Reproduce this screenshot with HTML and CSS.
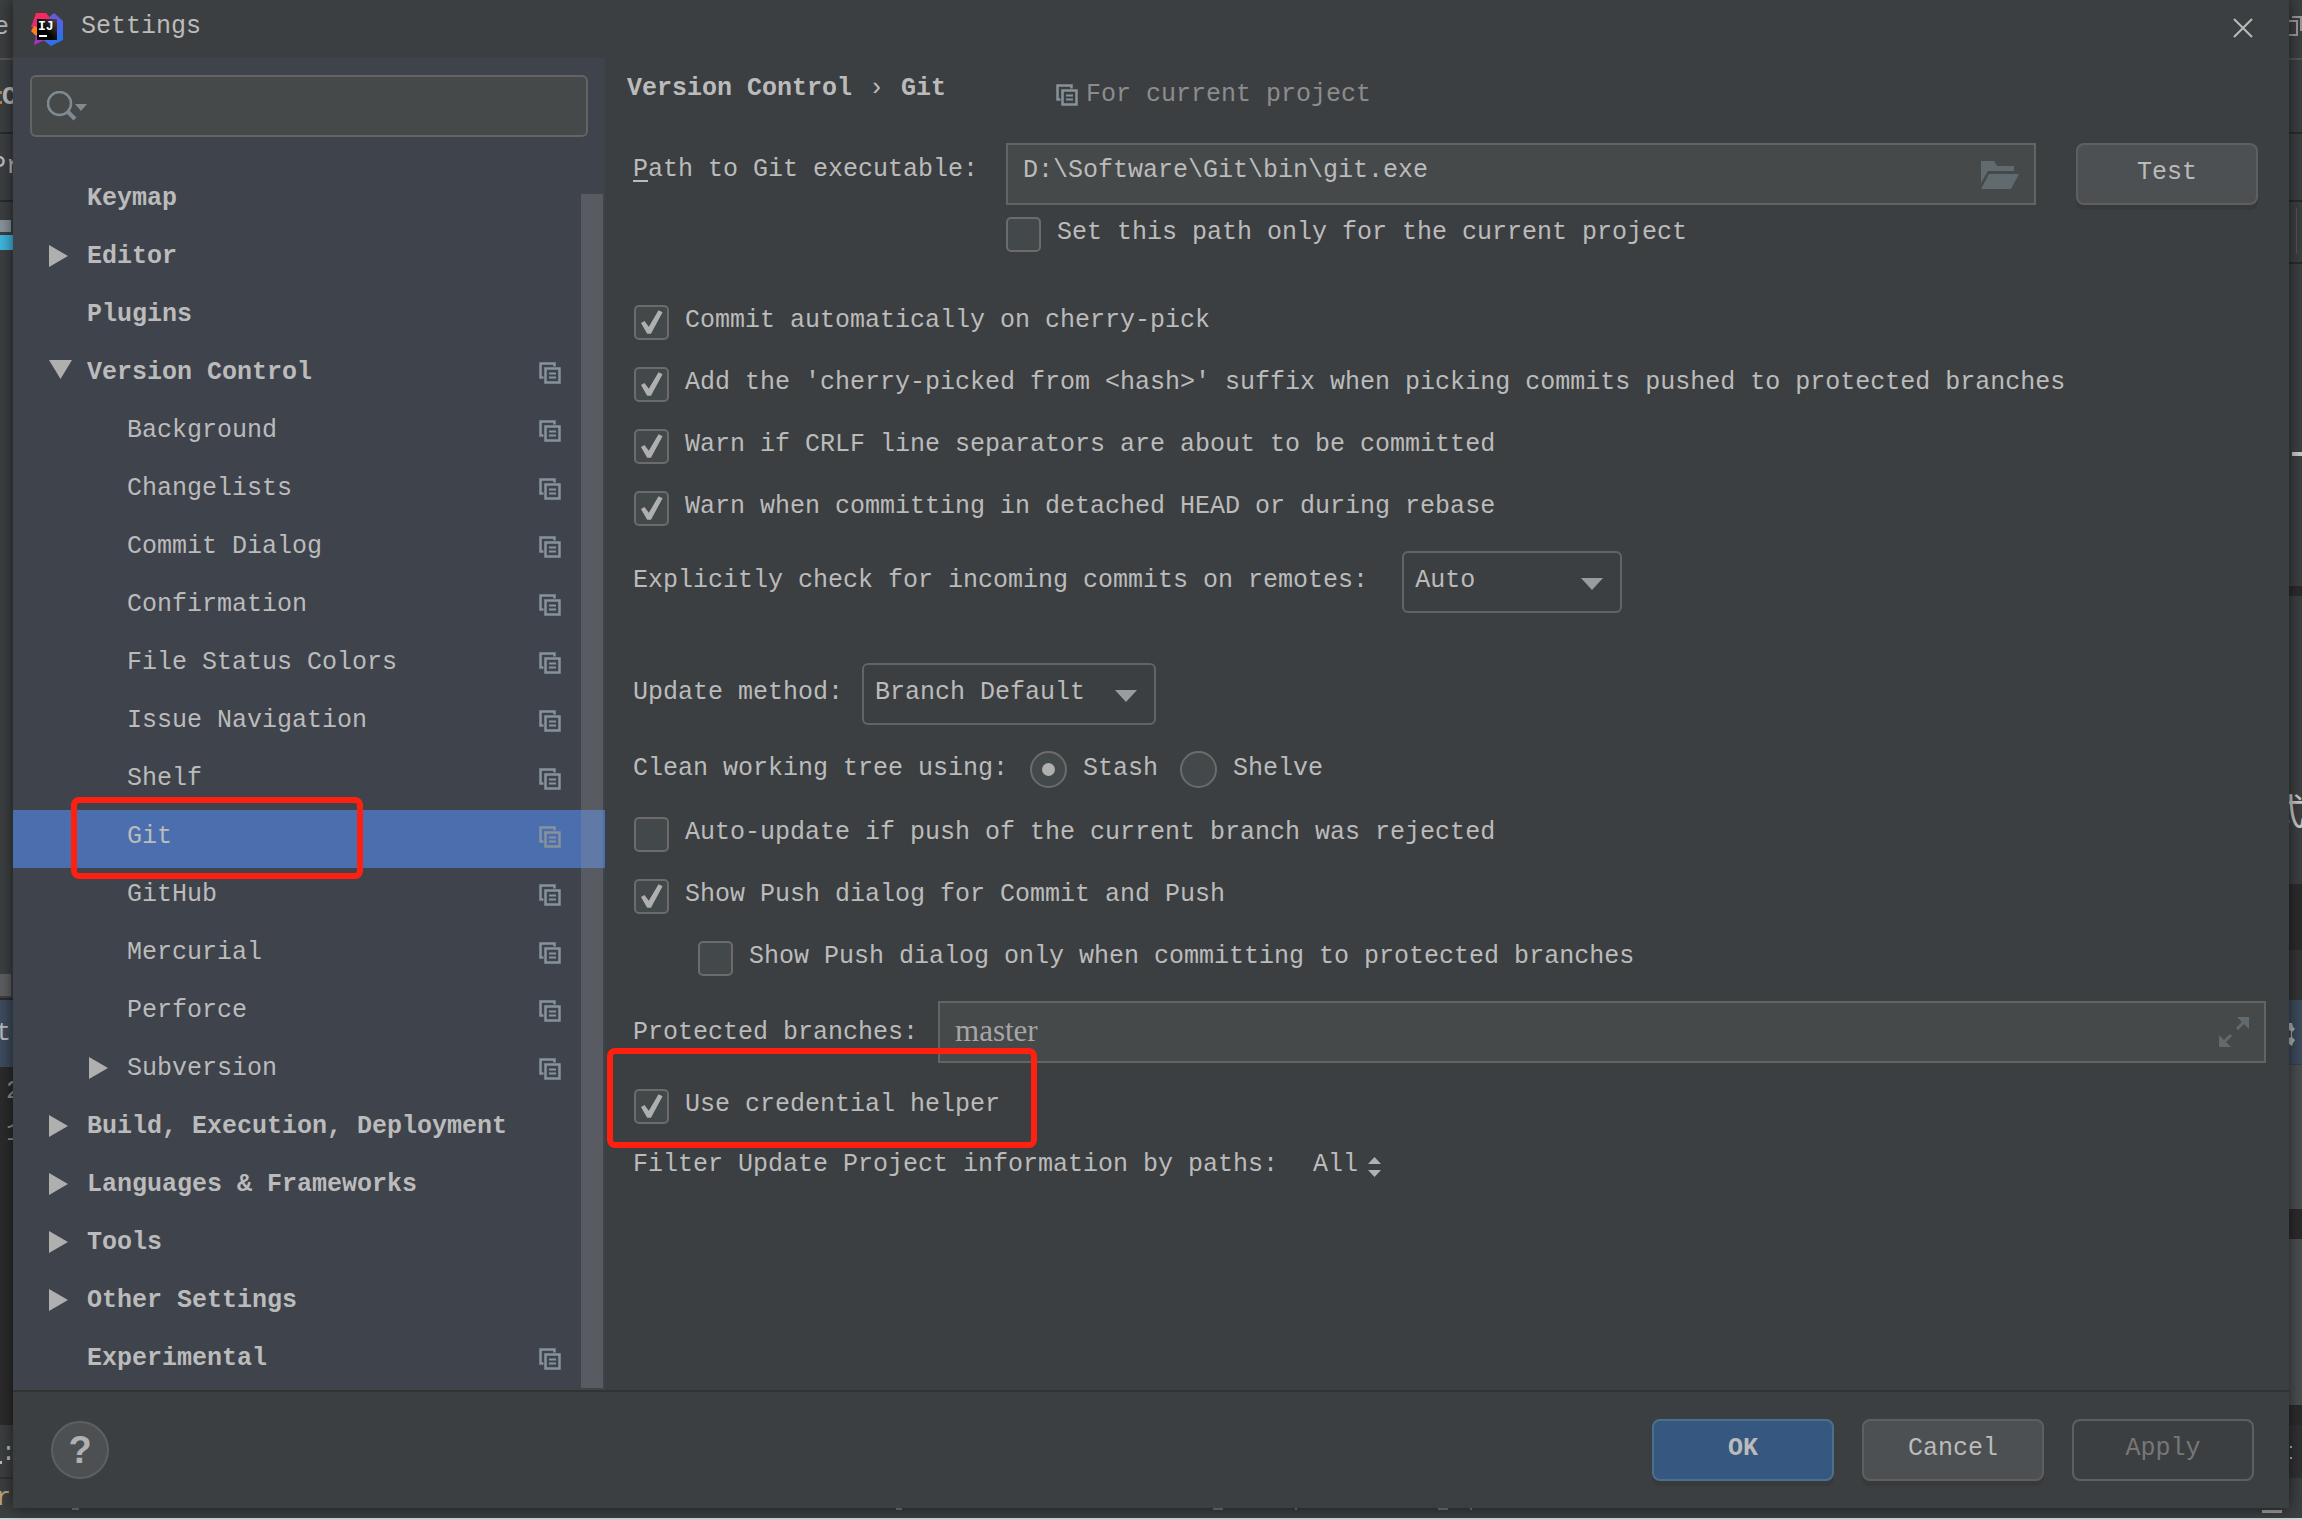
FILE: index.html
```html
<!DOCTYPE html>
<html lang="en">
<head>
<meta charset="utf-8">
<title>Settings</title>
<link rel="stylesheet" href="styles.css">
</head>
<body>
<svg class="defs" width="0" height="0" aria-hidden="true">
  <symbol id="copy" viewBox="0 0 22 22">
    <path d="M4.500 15.500H1.500V1.500H15.500V4.500" fill="none" stroke="currentColor" stroke-width="2.500"/>
    <path d="M6.500 6.500H20.500V20.500H6.500Z" fill="none" stroke="currentColor" stroke-width="2.500"/>
    <path d="M10 11.500H17M10 15.500H17" stroke="currentColor" stroke-width="2"/>
  </symbol>
  <symbol id="right" viewBox="0 0 19 22"><path d="M0 0L19 11L0 22Z" fill="currentColor"/></symbol>
  <symbol id="down" viewBox="0 0 23 19"><path d="M0 0H23L11.500 19Z" fill="currentColor"/></symbol>
</svg>

<div class="desktop">
  <svg class="behind" width="13" height="1508" aria-hidden="true">
    <rect width="13" height="1508" fill="#3c3f41"/>
    <text x="-6" y="34">e</text>
    <rect y="58" width="13" height="2" fill="#555555"/>
    <rect x="0" y="91" width="2" height="3" fill="#cc7832"/>
    <rect x="0" y="101" width="2" height="3" fill="#cc7832"/>
    <text x="2" y="104" class="strong">C</text>
    <rect y="132" width="13" height="2" fill="#2b2b2b"/>
    <text x="-9" y="173">P</text>
    <text x="6" y="173">r</text>
    <rect y="200" width="13" height="2" fill="#2b2b2b"/>
    <rect y="220" width="11" height="12" fill="#87939a"/>
    <rect y="235" width="13" height="15" fill="#3fb4de"/>
    <rect y="974" width="11" height="22" fill="#5c5e60"/>
    <rect y="998" width="13" height="2" fill="#2b2b2b"/>
    <rect y="1000" width="13" height="67" fill="#3d4b5c"/>
    <text x="-4" y="1040">t</text>
    <rect y="1067" width="13" height="358" fill="#2b2b2b"/>
    <text x="6" y="1098" class="dim">2</text>
    <text x="6" y="1140" class="dim">1</text>
    <rect x="0" y="1461" width="2" height="3" fill="#bbbbbb"/>
    <text x="1" y="1460">:</text>
    <rect y="1477" width="13" height="2" fill="#323232"/>
    <text x="-4" y="1505" class="warm">r</text>
  </svg>

  <div class="dialog">
    <header class="titlebar">
      <svg width="32" height="33" viewBox="0 0 32 33" aria-hidden="true">
        <defs>
          <linearGradient id="blue" x1="0" y1="0" x2="0.600" y2="1"><stop offset="0" stop-color="#3b6fe0"/><stop offset=".4" stop-color="#6b57dd"/><stop offset="1" stop-color="#2374ee"/></linearGradient>
          <linearGradient id="pink" x1="0" y1="0" x2="0" y2="1"><stop offset="0" stop-color="#fe2857"/><stop offset="1" stop-color="#d42c84"/></linearGradient>
          <linearGradient id="plate" x1="1" y1="0" x2="0.400" y2="0.600"><stop offset="0" stop-color="#4a4a4a"/><stop offset="1" stop-color="#000000"/></linearGradient>
        </defs>
        <path d="M16 6L23 0L32 8V27L20 33L11 26Z" fill="url(#blue)"/>
        <path d="M5 0H15L20 6L8 16L0 14Z" fill="url(#pink)"/>
        <path d="M3 13L8 15V25L5 23L0 18Z" fill="#fc801d"/>
        <path d="M5 22L16 26L3 32Z" fill="#a832c0"/>
        <rect x="6" y="6" width="20" height="21" fill="url(#plate)"/>
        <text x="7" y="17" class="logo-text">IJ</text>
        <rect x="8" y="22" width="8" height="2" fill="#ffffff"/>
      </svg>
      <h1 class="title">Settings</h1>
      <button class="close" type="button" aria-label="Close">
        <svg width="20" height="20" viewBox="0 0 20 20"><path d="M1 1L19 19M19 1L1 19" stroke="#bbbbbb" stroke-width="2"/></svg>
      </button>
    </header>

    <div class="body">
      <aside class="sidebar">
        <label class="search">
          <svg width="40" height="30" viewBox="0 0 40 30" aria-hidden="true">
            <circle cx="12.500" cy="12.500" r="11.500" fill="none" stroke="#7f8b91" stroke-width="2.500"/>
            <path d="M20 20L28 28" stroke="#7f8b91" stroke-width="4"/>
            <path d="M28 13H40L34 20Z" fill="#7f8b91"/>
          </svg>
          <input type="text" aria-label="Search settings">
        </label>
        <div class="tree-area">
          <nav class="tree" aria-label="Settings categories">
            <a class="row top" href="#"><span class="toggle"></span><span class="name">Keymap</span></a>
            <a class="row top" href="#"><span class="toggle"><svg width="19" height="22"><use href="#right"/></svg></span><span class="name">Editor</span></a>
            <a class="row top" href="#"><span class="toggle"></span><span class="name">Plugins</span></a>
            <a class="row top" href="#"><span class="toggle open"><svg width="23" height="19"><use href="#down"/></svg></span><span class="name">Version Control</span><svg class="copy" width="22" height="22"><use href="#copy"/></svg></a>
            <a class="row child" href="#"><span class="toggle"></span><span class="name">Background</span><svg class="copy" width="22" height="22"><use href="#copy"/></svg></a>
            <a class="row child" href="#"><span class="toggle"></span><span class="name">Changelists</span><svg class="copy" width="22" height="22"><use href="#copy"/></svg></a>
            <a class="row child" href="#"><span class="toggle"></span><span class="name">Commit Dialog</span><svg class="copy" width="22" height="22"><use href="#copy"/></svg></a>
            <a class="row child" href="#"><span class="toggle"></span><span class="name">Confirmation</span><svg class="copy" width="22" height="22"><use href="#copy"/></svg></a>
            <a class="row child" href="#"><span class="toggle"></span><span class="name">File Status Colors</span><svg class="copy" width="22" height="22"><use href="#copy"/></svg></a>
            <a class="row child" href="#"><span class="toggle"></span><span class="name">Issue Navigation</span><svg class="copy" width="22" height="22"><use href="#copy"/></svg></a>
            <a class="row child" href="#"><span class="toggle"></span><span class="name">Shelf</span><svg class="copy" width="22" height="22"><use href="#copy"/></svg></a>
            <a class="row child selected" href="#" aria-current="page"><span class="toggle"></span><span class="name">Git</span><svg class="copy" width="22" height="22"><use href="#copy"/></svg><span class="mark mark-row"></span></a>
            <a class="row child" href="#"><span class="toggle"></span><span class="name">GitHub</span><svg class="copy" width="22" height="22"><use href="#copy"/></svg></a>
            <a class="row child" href="#"><span class="toggle"></span><span class="name">Mercurial</span><svg class="copy" width="22" height="22"><use href="#copy"/></svg></a>
            <a class="row child" href="#"><span class="toggle"></span><span class="name">Perforce</span><svg class="copy" width="22" height="22"><use href="#copy"/></svg></a>
            <a class="row child" href="#"><span class="toggle"><svg width="19" height="22"><use href="#right"/></svg></span><span class="name">Subversion</span><svg class="copy" width="22" height="22"><use href="#copy"/></svg></a>
            <a class="row top" href="#"><span class="toggle"><svg width="19" height="22"><use href="#right"/></svg></span><span class="name">Build, Execution, Deployment</span></a>
            <a class="row top" href="#"><span class="toggle"><svg width="19" height="22"><use href="#right"/></svg></span><span class="name">Languages &amp; Frameworks</span></a>
            <a class="row top" href="#"><span class="toggle"><svg width="19" height="22"><use href="#right"/></svg></span><span class="name">Tools</span></a>
            <a class="row top" href="#"><span class="toggle"><svg width="19" height="22"><use href="#right"/></svg></span><span class="name">Other Settings</span></a>
            <a class="row top" href="#"><span class="toggle"></span><span class="name">Experimental</span><svg class="copy" width="22" height="22"><use href="#copy"/></svg></a>
          </nav>
          <div class="scrollbar"></div>
        </div>
      </aside>

      <main class="page">
        <div class="page-head">
          <h2 class="crumbs"><span>Version Control</span><span class="sep">›</span><span>Git</span></h2>
          <div class="scope"><svg class="copy" width="22" height="22"><use href="#copy"/></svg><span>For current project</span></div>
        </div>

        <div class="path-row">
          <label class="path-label" for="git-path"><span class="mnemonic">P</span>ath to Git executable:</label>
          <div class="field">
            <input id="git-path" type="text" value="D:\Software\Git\bin\git.exe">
            <button class="icon-button browse" type="button" aria-label="Browse">
              <svg width="38" height="28" viewBox="0 0 38 28"><path d="M0 0H13L16 5H33V10H7L0 22Z" fill="#616a6e"/><path d="M8 13H38L30 28H0Z" fill="#616a6e"/></svg>
            </button>
          </div>
          <button class="button" type="button">Test</button>
        </div>
        <label class="check indent-field"><input type="checkbox"><span>Set this path only for the current project</span></label>

        <div class="checks first">
          <label class="check"><input type="checkbox" checked><span>Commit automatically on cherry-pick</span></label>
          <label class="check"><input type="checkbox" checked><span>Add the 'cherry-picked from &lt;hash&gt;' suffix when picking commits pushed to protected branches</span></label>
          <label class="check"><input type="checkbox" checked><span>Warn if CRLF line separators are about to be committed</span></label>
          <label class="check"><input type="checkbox" checked><span>Warn when committing in detached HEAD or during rebase</span></label>
        </div>

        <div class="line incoming">
          <label for="incoming">Explicitly check for incoming commits on remotes:</label>
          <span class="combo combo-small">
            <select id="incoming"><option>Auto</option></select>
            <svg width="22" height="12" viewBox="0 0 22 12" aria-hidden="true"><path d="M0 0H22L11 12Z" fill="#9a9da0"/></svg>
          </span>
        </div>

        <div class="line update">
          <label for="update">Update method:</label>
          <span class="combo combo-large">
            <select id="update"><option>Branch Default</option></select>
            <svg width="22" height="12" viewBox="0 0 22 12" aria-hidden="true"><path d="M0 0H22L11 12Z" fill="#9a9da0"/></svg>
          </span>
        </div>

        <div class="line clean" role="radiogroup" aria-labelledby="clean-label">
          <span id="clean-label">Clean working tree using:</span>
          <label class="radio"><input type="radio" name="clean" checked><span>Stash</span></label>
          <label class="radio"><input type="radio" name="clean"><span>Shelve</span></label>
        </div>

        <div class="checks">
          <label class="check"><input type="checkbox"><span>Auto-update if push of the current branch was rejected</span></label>
          <label class="check"><input type="checkbox" checked><span>Show Push dialog for Commit and Push</span></label>
          <label class="check nested"><input type="checkbox"><span>Show Push dialog only when committing to protected branches</span></label>
        </div>

        <div class="line protected">
          <label for="branches">Protected branches:</label>
          <div class="field">
            <input id="branches" class="serif" type="text" value="master">
            <button class="icon-button" type="button" aria-label="Expand">
              <svg width="30" height="30" viewBox="0 0 30 30"><path d="M18 0H30V12ZM0 18L12 30H0Z" fill="#616a6e"/><path d="M25 5L18 12M5 25L12 18" stroke="#616a6e" stroke-width="3"/></svg>
            </button>
          </div>
        </div>

        <div class="credential">
          <label class="check"><input type="checkbox" checked><span>Use credential helper</span></label>
          <span class="mark mark-credential"></span>
        </div>

        <div class="line filter">
          <label for="filter">Filter Update Project information by paths:</label>
          <span class="link-combo">
            <select id="filter"><option>All</option></select>
            <svg width="13" height="20" viewBox="0 0 13 20" aria-hidden="true"><path d="M0 7L6.500 0L13 7ZM0 13H13L6.500 20Z" fill="#afb1b3"/></svg>
          </span>
        </div>
      </main>
    </div>

    <footer class="footer">
      <button class="help" type="button" aria-label="Help">?</button>
      <div class="actions">
        <button class="button primary" type="button">OK</button>
        <button class="button" type="button">Cancel</button>
        <button class="button" type="button" disabled>Apply</button>
      </div>
    </footer>
  </div>

  <svg class="behind" width="13" height="1508" aria-hidden="true">
    <rect width="13" height="1508" fill="#3c3f41"/>
    <path d="M0 21H8V35H0M3 17H13M12 17V31" fill="none" stroke="#9a9a9a" stroke-width="2"/>
    <rect y="58" width="13" height="2" fill="#555555"/>
    <rect y="132" width="13" height="2" fill="#2b2b2b"/>
    <rect y="200" width="13" height="2" fill="#2b2b2b"/>
    <rect x="7" y="208" width="1" height="46" fill="#555555"/>
    <rect y="262" width="13" height="2" fill="#2b2b2b"/>
    <rect x="3" y="452" width="10" height="4" fill="#c8c8c8"/>
    <rect y="586" width="13" height="10" fill="#2b2b2b"/>
    <text x="-20" y="825" class="cjk">式</text>
    <rect y="884" width="13" height="116" fill="#2b2b2b"/>
    <rect y="950" width="13" height="50" fill="#333435"/>
    <rect y="1000" width="13" height="64" fill="#3d4b5c"/>
    <path d="M0 1023H3L4 1027L6 1029L3 1032V1037L6 1040L4 1043L3 1046L0 1044V1038L2 1037V1031L0 1030Z" fill="#afb1b3"/>
    <rect y="1065" width="13" height="144" fill="#4b4e50"/>
    <rect y="1209" width="13" height="30" fill="#2b2b2b"/>
    <rect y="1239" width="13" height="166" fill="#4b4e50"/>
    <rect y="1405" width="13" height="73" fill="#2b2b2b"/>
    <rect y="1425" width="13" height="53" fill="#2f3133"/>
    <rect x="1" y="1446" width="2" height="2" fill="#a9b7c6"/>
    <rect x="1" y="1457" width="2" height="2" fill="#a9b7c6"/>
  </svg>

  <div class="below">
    <svg width="2302" height="10" aria-hidden="true">
      <path d="M72 1H79M896 1H902M1213 1H1223M1295 1H1297M1438 1H1448M1470 1H1472" stroke="#77797a" stroke-width="2"/>
      <rect x="2262" y="2" width="20" height="3" fill="#a0a0a0"/>
    </svg>
  </div>
</div>
</body>
</html>
```
FILE: styles.css
```css
* { box-sizing: border-box; }

body {
  margin: 0;
  background: #3c3f41;
  color: #bbbbbb;
  font: 25px/30px "Liberation Mono", monospace;
}

.defs { display: block; }

button, input, select {
  margin: 0;
  color: inherit;
  font: inherit;
}

.desktop {
  display: grid;
  grid-template-columns: 13px 1fr 13px;
  grid-template-rows: 1fr auto;
  min-height: 100vh;
  overflow: hidden;
}

.behind { display: block; overflow: hidden; fill: #bbbbbb; }
.behind .strong { font-weight: bold; }
.behind .dim { fill: #8a939c; }
.behind .warm { fill: #b5a77c; }
.behind .cjk { font: 36px "Noto Sans CJK SC", sans-serif; fill: #c8c8c8; }

.below {
  grid-column: 1 / -1;
  height: 12px;
  border-bottom: 2px solid #cdd5d9;
  overflow: hidden;
}
.below svg { display: block; }

.dialog {
  position: relative;
  display: flex;
  flex-direction: column;
  min-width: 0;
  background: #3c3f41;
  box-shadow: 0 0 14px rgba(0, 0, 0, 0.6);
}

/* Title bar */
.titlebar {
  display: flex;
  align-items: center;
  height: 58px;
  padding: 0 36px 0 18px;
}
.logo-text { font: bold 13px "Liberation Mono", monospace; fill: #ffffff; }
.title {
  margin: 0 auto 0 18px;
  padding-bottom: 4px;
  font-size: 25px;
  font-weight: normal;
}
.close {
  display: flex;
  padding: 0 0 2px;
  border: 0;
  background: none;
}

.body { display: flex; flex: 1; }

/* Category tree */
.sidebar {
  flex: none;
  width: 592px;
  background: #3f434c;
}
.search {
  display: flex;
  align-items: center;
  height: 62px;
  margin: 17px 17px 35px;
  padding: 0 15px;
  border: 2px solid #646464;
  border-radius: 6px;
  background: #45494a;
}
.search input {
  flex: 1;
  min-width: 0;
  border: 0;
  outline: 0;
  background: none;
}
.tree-area { position: relative; }
.row {
  position: relative;
  display: flex;
  align-items: center;
  height: 58px;
  padding: 0 44px 4px 36px;
  color: inherit;
  text-decoration: none;
}
.row.top { font-weight: bold; }
.row.child { padding-left: 76px; }
.row.selected { background: #4b6eaf; }
.toggle {
  display: flex;
  flex: none;
  width: 38px;
  padding-bottom: 2px;
  color: #afafaf;
}
.toggle.open { padding-bottom: 8px; }
.name { flex: 1; }
.copy { flex: none; color: #87939a; }
.scrollbar {
  position: absolute;
  top: 22px;
  right: 2px;
  bottom: 2px;
  width: 22px;
  background: rgba(150, 150, 150, 0.3);
}

/* Settings page */
.page {
  flex: 1;
  min-width: 0;
  padding: 16px 23px 0 28px;
}
.page-head {
  display: flex;
  height: 69px;
}
.crumbs {
  display: flex;
  gap: 17px;
  margin: 0 110px 0 -6px;
  font-size: 25px;
}
.sep { font-weight: normal; }
.scope {
  display: flex;
  align-items: center;
  gap: 8px;
  height: 42px;
  color: #8c8c8c;
}

.path-row {
  display: flex;
  padding-right: 8px;
}
.path-label {
  flex: none;
  width: 373px;
  padding-top: 12px;
}
.mnemonic { text-decoration: underline; text-underline-offset: 4px; }
.field {
  display: flex;
  flex: 1;
  align-items: center;
  min-width: 0;
  height: 62px;
  padding: 0 15px;
  border: 2px solid #646464;
  background: #45494a;
}
.field input {
  flex: 1;
  min-width: 0;
  height: 58px;
  padding: 0 0 8px;
  border: 0;
  outline: 0;
  background: none;
}
.field .serif {
  padding-bottom: 2px;
  color: #a6a6a6;
  font-family: "Liberation Serif", serif;
  font-size: 31px;
}
.icon-button {
  display: flex;
  padding: 0;
  border: 0;
  background: none;
}
.browse { padding-top: 2px; }

.button {
  flex: none;
  width: 182px;
  height: 62px;
  padding: 0 0 2px;
  border: 2px solid #5e6060;
  border-radius: 8px;
  background: #4c5052;
  box-shadow: 0 5px 0 #37393a;
}
.button.primary {
  border-color: #4c708c;
  background: #365880;
  font-weight: bold;
}
.button:disabled {
  border-color: #5e6060;
  background: none;
  box-shadow: none;
  color: #777777;
}
.path-row .button { margin-left: 40px; }

.check, .radio {
  display: flex;
  align-items: center;
  gap: 16px;
}
.check span { padding-bottom: 4px; }
.radio span { padding-bottom: 2px; }
.check input, .radio input {
  display: grid;
  flex: none;
  place-items: center;
  width: 35px;
  height: 35px;
  border: 2px solid #6b6b6b;
  border-radius: 5px;
  background: #43494a;
  appearance: none;
}
.check input:checked::before {
  width: 27px;
  height: 27px;
  background: #afafaf;
  clip-path: polygon(11% 52%, 24% 44%, 40% 66%, 76% 5%, 91% 12%, 48% 92%, 34% 92%);
  content: "";
}
.radio input {
  width: 37px;
  height: 37px;
  border-radius: 50%;
}
.radio input:checked::before {
  width: 13px;
  height: 13px;
  border-radius: 50%;
  background: #afafaf;
  content: "";
}
.checks {
  display: flex;
  flex-direction: column;
  gap: 27px;
  margin-top: 29px;
  padding-left: 1px;
}
.checks.first { margin-top: 53px; }
.indent-field { margin: 12px 0 0 373px; }
.nested { margin-left: 64px; }

.line {
  display: flex;
  align-items: center;
  gap: 20px;
}
.incoming { gap: 34px; margin-top: 25px; }
.update { gap: 19px; margin-top: 50px; }
.clean { gap: 22px; margin-top: 26px; }
.clean > span { padding-bottom: 2px; }
.protected { margin-top: 25px; }
.protected label { padding-top: 2px; }
.filter { gap: 35px; margin-top: 26px; }
.update label, .incoming label { padding-bottom: 2px; }

.combo, .link-combo {
  display: grid;
  align-items: center;
}
.combo select, .link-combo select {
  grid-area: 1 / 1;
  border: 0;
  outline: 0;
  background: none;
  appearance: none;
}
.combo select {
  height: 62px;
  padding: 0 11px 2px;
  border: 2px solid #646464;
  border-radius: 6px;
}
.combo svg, .link-combo svg {
  grid-area: 1 / 1;
  justify-self: end;
  pointer-events: none;
}
.combo svg { margin: 4px 19px 0 0; }
.combo-small { width: 220px; }
.combo-large { width: 294px; }
.link-combo { width: 68px; }
.link-combo select { height: 30px; padding: 0; }
.link-combo svg { margin-top: 4px; }

.credential {
  position: relative;
  margin-top: 26px;
  padding-left: 1px;
}

/* Red highlight frames */
.mark {
  position: absolute;
  z-index: 1;
  border: 6px solid #ff2010;
  border-radius: 8px;
  pointer-events: none;
}
.mark-row { top: -13px; left: 58px; width: 292px; height: 82px; }
.mark-credential { top: -41px; left: -26px; width: 430px; height: 100px; }

/* Footer */
.footer {
  display: flex;
  align-items: center;
  justify-content: space-between;
  height: 118px;
  padding: 0 35px 0 38px;
  border-top: 2px solid #323232;
}
.help {
  width: 58px;
  height: 58px;
  padding: 0;
  border: 2px solid #5e6060;
  border-radius: 50%;
  background: #4c5052;
  color: #afb1b3;
  font: bold 38px "Liberation Sans", sans-serif;
}
.actions { display: flex; gap: 28px; }
```
